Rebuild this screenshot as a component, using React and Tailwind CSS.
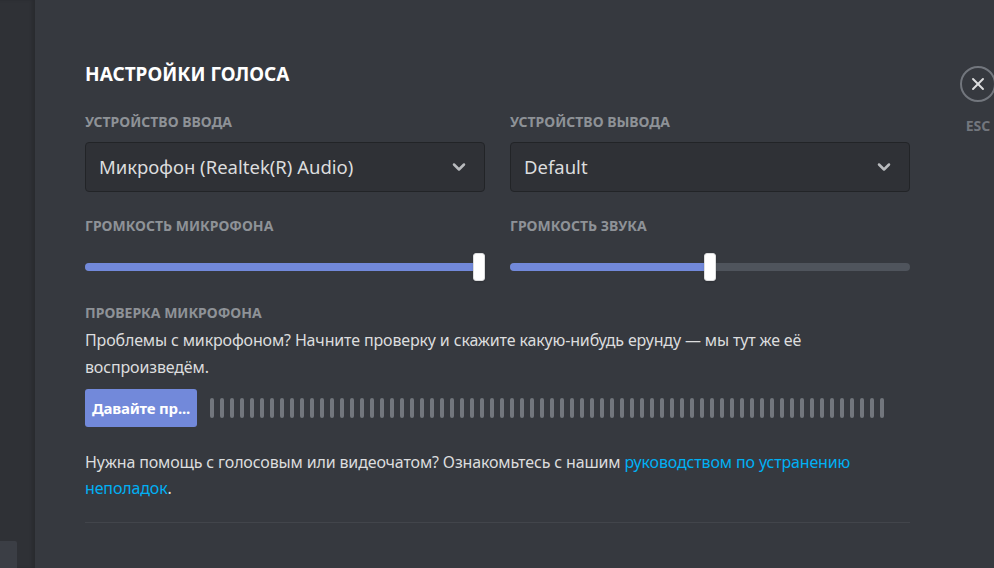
import { ChevronDown, X } from "lucide-react";

const BARS = Array.from({ length: 68 });

function Label({ children, className = "" }) {
  return (
    <div className={`text-[14px] font-bold uppercase leading-4 text-[#8e9297] ${className}`}>
      {children}
    </div>
  );
}

function Select({ value }) {
  return (
    <div className="flex h-[50px] items-center justify-between rounded-[4px] border border-[#222427] bg-[#2f3136] pl-[13px] pr-[15px]">
      <span className="text-[18.5px] text-[#dcddde]">{value}</span>
      <ChevronDown className="h-[20px] w-[20px] text-[#b9bbbe]" strokeWidth={3} />
    </div>
  );
}

function Slider({ pct }) {
  return (
    <div className="relative mt-[19px] h-[28px]">
      <div className="absolute left-0 right-0 top-[10px] h-[8px] rounded-full bg-[#4f545c]" />
      <div
        className="absolute left-0 top-[10px] h-[8px] rounded-full bg-[#7289da]"
        style={{ width: `${pct}%` }}
      />
      <div
        className="absolute top-0 h-[28px] w-[12px] -translate-x-1/2 rounded-[3px] border border-[#dcddde] bg-white shadow"
        style={{ left: `${pct}%` }}
      />
    </div>
  );
}

export default function App() {
  return (
    <div
      className="flex h-[568px] w-[994px] overflow-hidden bg-[#36393f]"
      style={{ fontFamily: "'Noto Sans', 'Open Sans', sans-serif" }}
    >
      {/* left sidebar sliver */}
      <div className="relative flex w-[35px] shrink-0 flex-col bg-[#2f3136] shadow-[inset_-3px_0_3px_rgba(0,0,0,0.12)]">
        <div className="mt-auto h-[27px] w-[17px] rounded-tr-[2px] bg-[#3b3e45]" />
      </div>

      {/* content */}
      <div className="w-[875px] shrink-0 pl-[50px] pt-[62px]">
        <h2 className="text-[19px] font-bold uppercase leading-6 text-white">Настройки голоса</h2>

        <div className="mt-[28px] grid grid-cols-2 gap-x-[25px]">
          <div>
            <Label>Устройство ввода</Label>
            <div className="mt-[12px]">
              <Select value="Микрофон (Realtek(R) Audio)" />
            </div>
          </div>
          <div>
            <Label>Устройство вывода</Label>
            <div className="mt-[12px]">
              <Select value="Default" />
            </div>
          </div>

          <div className="mt-[26px]">
            <Label>Громкость микрофона</Label>
            <Slider pct={98.5} />
          </div>
          <div className="mt-[26px]">
            <Label>Громкость звука</Label>
            <Slider pct={50} />
          </div>
        </div>

        <Label className="mt-[24px]">Проверка микрофона</Label>
        <p className="mt-[6px] text-[16px] leading-[27px] tracking-[-0.15px] text-[#dcddde]">
          Проблемы с микрофоном? Начните проверку и скажите какую-нибудь ерунду — мы тут же её воспроизведём.
        </p>

        <div className="mt-[8px] flex items-center">
          <button className="h-[38px] w-[112px] shrink-0 whitespace-nowrap rounded-[3px] bg-[#7289da] text-[15px] font-bold tracking-[-0.2px] text-white">
            Давайте пр...
          </button>
          <div className="ml-[13px] flex gap-[6px]">
            {BARS.map((_, i) => (
              <span key={i} className="h-[20px] w-[4px] rounded-full bg-[#72767d]" />
            ))}
          </div>
        </div>

        <p className="mt-[22px] text-[16px] leading-[26px] tracking-[-0.15px] text-[#dcddde]">
          Нужна помощь с голосовым или видеочатом? Ознакомьтесь с нашим{" "}
          <span className="text-[#00b0f4]">руководством по устранению</span>{" "}
          <span className="text-[#00b0f4]">неполадок</span>.
        </p>

        <div className="mt-[21px] h-px bg-[#42454b]" />
      </div>

      {/* close */}
      <div className="ml-[50px] flex shrink-0 flex-col items-center pt-[66px]">
        <div className="flex h-[36px] w-[36px] items-center justify-center rounded-full border-2 border-[#72767d]">
          <X className="h-[20px] w-[20px] text-[#dcddde]" strokeWidth={2.25} />
        </div>
        <span className="mt-[13px] text-[14px] font-bold text-[#72767d]">ESC</span>
      </div>
    </div>
  );
}
